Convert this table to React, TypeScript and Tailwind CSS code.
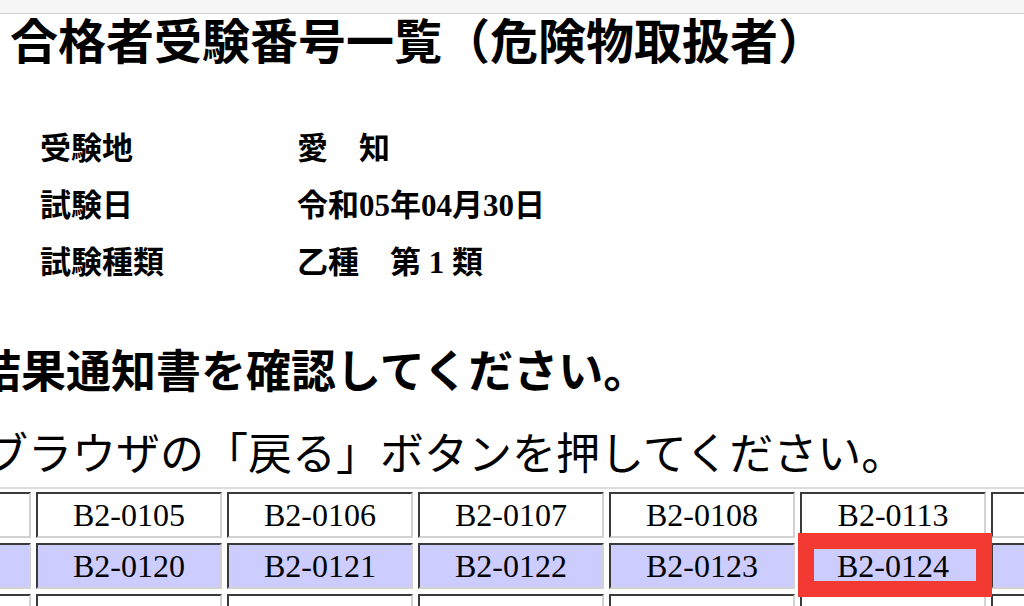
import React from 'react';

const info: [string, string][] = [
  ['受験地', '愛　知'],
  ['試験日', '令和05年04月30日'],
  ['試験種類', '乙種　第 1 類'],
];

const rows: { cells: string[]; tone: 'white' | 'lavender' }[] = [
  { cells: ['B2-0104', 'B2-0105', 'B2-0106', 'B2-0107', 'B2-0108', 'B2-0113', 'B2-0114'], tone: 'white' },
  { cells: ['B2-0119', 'B2-0120', 'B2-0121', 'B2-0122', 'B2-0123', 'B2-0124', 'B2-0125'], tone: 'lavender' },
  { cells: ['B2-0126', 'B2-0127', 'B2-0128', 'B2-0129', 'B2-0130', 'B2-0131', 'B2-0132'], tone: 'white' },
];

const HIGHLIGHT = 'B2-0124';

const Cell: React.FC<{ value: string; tone: 'white' | 'lavender' }> = ({ value, tone }) => (
  <div
    className={`relative shrink-0 w-[186px] h-[46px] border-2 border-t-[#3a3a3a] border-l-[#3a3a3a] border-r-[#d2d2d2] border-b-[#d2d2d2] flex justify-center pt-[5px] text-[32px] leading-[32px] ${
      tone === 'lavender' ? 'bg-[#ccccff]' : 'bg-white'
    }`}
  >
    {value}
    {value === HIGHLIGHT && (
      <div className="absolute z-10 -left-[4px] -top-[12px] -right-[8px] -bottom-[10px] border-[16px] border-[#f23a32]" />
    )}
  </div>
);

export default function App() {
  return (
    <div className="w-[1024px] h-[606px] overflow-hidden bg-white text-black font-['Liberation_Serif','Noto_Sans_CJK_JP',serif]">
      {/* browser chrome strip */}
      <div className="h-[14px] bg-[#f6f6f6] border-b border-[#cdcdcd]" />

      <h1 className="pl-[10px] pt-[2px] text-[48px] leading-[54px] font-bold whitespace-nowrap">
        合格者受験番号一覧（危険物取扱者）
      </h1>

      {/* exam info */}
      <div className="mt-[51px] flex flex-col">
        {info.map(([label, value]) => (
          <div key={label} className="h-[57px] flex items-center text-[31px] font-bold">
            <span className="w-[297px] pl-[40px] shrink-0">{label}</span>
            <span className="whitespace-pre">{value}</span>
          </div>
        ))}
      </div>

      <p className="mt-[51px] ml-[-24px] text-[45px] leading-[60px] font-bold whitespace-nowrap">
        結果通知書を確認してください。
      </p>
      <p className="mt-[23px] ml-[-16px] text-[44px] leading-[60px] whitespace-nowrap">
        ブラウザの「戻る」ボタンを押してください。
      </p>

      {/* result table */}
      <div className="mt-[1px] border-t-2 border-[#dcdcdc] pt-[3px] ml-[-155px] flex flex-col gap-[5px]">
        {rows.map((row, i) => (
          <div key={i} className="flex gap-[5px]">
            {row.cells.map((c) => (
              <Cell key={c} value={c} tone={row.tone} />
            ))}
          </div>
        ))}
      </div>
    </div>
  );
}
